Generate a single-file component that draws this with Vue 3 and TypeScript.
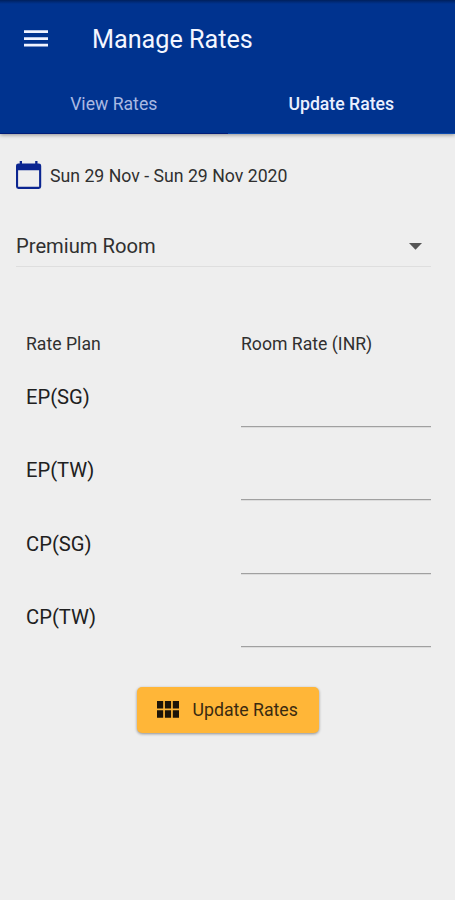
<script setup lang="ts">
import { ref } from 'vue'

interface RatePlan {
  name: string
  rate: string
}

const tabs: string[] = ['View Rates', 'Update Rates']
const activeTab = ref(1)
const plans = ref<RatePlan[]>([
  { name: 'EP(SG)', rate: '' },
  { name: 'EP(TW)', rate: '' },
  { name: 'CP(SG)', rate: '' },
  { name: 'CP(TW)', rate: '' },
])
</script>

<template>
  <div class="screen">
    <header class="header">
      <div class="bar">
        <button class="menu" aria-label="Menu">
          <svg width="24" height="17" viewBox="0 0 24 17">
            <path fill="#f0f3ff" d="M0 .3h24v2.700H0zM0 7.200h24v2.700H0zM0 13.800h24v2.700H0z" />
          </svg>
        </button>
        <h1 class="title">Manage Rates</h1>
      </div>
      <nav class="tabs">
        <button
          v-for="(tab, i) in tabs"
          :key="tab"
          class="tab"
          :class="{ active: i === activeTab }"
          @click="activeTab = i"
        >{{ tab }}</button>
      </nav>
    </header>

    <main class="content">
      <div class="dates">
        <svg width="26" height="29" viewBox="0 0 26 29">
          <path
            fill="#0b2590"
            fill-rule="evenodd"
            d="M3.700 0H6v2.400h13.200V0h2.300v2.400h1.300A2.400 2.400 0 0 1 25.200 4.800v20.700a2.400 2.400 0 0 1-2.400 2.400H2.400A2.400 2.400 0 0 1 0 25.500V4.800A2.400 2.400 0 0 1 2.400 2.400h1.300zM2.100 9.300v16.500h21V9.300z"
          />
        </svg>
        <span class="range">Sun 29 Nov - Sun 29 Nov 2020</span>
      </div>

      <div class="select">
        <span class="room">Premium Room</span>
        <svg class="caret" width="13" height="7" viewBox="0 0 13 7">
          <path fill="#555" d="M0 0h13L6.500 6.700z" />
        </svg>
      </div>

      <section class="rates">
        <div class="row head">
          <span>Rate Plan</span>
          <span>Room Rate (INR)</span>
        </div>
        <div v-for="plan in plans" :key="plan.name" class="row plan">
          <span class="name">{{ plan.name }}</span>
          <input v-model="plan.rate" class="rate" inputmode="decimal" :aria-label="plan.name" />
        </div>
      </section>

      <button class="update">
        <svg width="22" height="17" viewBox="0 0 22 17">
          <path
            fill="#1c1408"
            d="M0 0h6.200v7.600H0zM7.900 0h6.200v7.600H7.900zM15.800 0H22v7.600h-6.200zM0 9.200h6.200v7.600H0zM7.900 9.200h6.200v7.600H7.900zM15.800 9.200H22v7.600h-6.200z"
          />
        </svg>
        <span class="label">Update Rates</span>
      </button>
    </main>
  </div>
</template>

<style>
body {
  background: #eeeeee;
}
</style>

<style scoped>
.screen {
  min-height: 900px;
  box-sizing: border-box;
  background: #eeeeee;
  font-family: Roboto, 'Liberation Sans', sans-serif;
  color: #303030;
}

button {
  border: 0;
  padding: 0;
  background: none;
  font: inherit;
  color: inherit;
}

.header {
  height: 134px;
  box-sizing: border-box;
  background: linear-gradient(#00205c 0, #002a78 2px, #00338f 4px);
  box-shadow: 0 1px 4px rgba(0, 0, 0, 0.4);
}

.bar {
  display: flex;
  align-items: center;
  height: 72px;
  padding: 5px 24px 0;
  box-sizing: border-box;
}

.menu,
.menu svg {
  display: block;
}

.title {
  margin: 3px 0 0 44px;
  font-size: 25.200px;
  font-weight: 400;
  line-height: 32px;
  color: #f4f6ff;
  white-space: nowrap;
}

.tabs {
  display: grid;
  grid-template-columns: 1fr 1fr;
  height: 62px;
}

.tab {
  padding-top: 2px;
  font-size: 17.650px;
  color: #a9b9e2;
  border-bottom: 1px solid #001c78;
}

.tab.active {
  font-weight: 500;
  color: #eaf0ff;
  border-bottom-color: #0b49ae;
}

.content {
  display: flex;
  flex-direction: column;
  padding: 27px 24px 0 16px;
}

.dates {
  display: flex;
  align-items: center;
  height: 29px;
  gap: 8px;
}

.range {
  font-size: 17.700px;
  line-height: 24px;
  white-space: nowrap;
}

.select {
  display: flex;
  align-items: center;
  justify-content: space-between;
  height: 41px;
  margin-top: 35px;
  padding-right: 9px;
  border-bottom: 1px solid #dedede;
}

.caret {
  margin-top: 2px;
}

.room {
  font-size: 20.200px;
}

.rates {
  margin-top: 63px;
  padding-left: 10px;
}

.row {
  display: grid;
  grid-template-columns: 215px 1fr;
}

.head {
  height: 27px;
  line-height: 28px;
  font-size: 17.650px;
}

.plan {
  height: 73.400px;
}

.name {
  padding-top: 27px;
  font-size: 20.200px;
  line-height: 26px;
  color: #202020;
}

.rate {
  width: 100%;
  height: 70px;
  box-sizing: border-box;
  padding: 30px 0 0;
  border: 0;
  border-bottom: 1px solid #a0a0a0;
  border-radius: 0;
  outline: 0;
  background: transparent;
  box-shadow: 0 1px 0 #dcdcdc;
  font: 20px Roboto, sans-serif;
}

.update {
  display: flex;
  align-items: center;
  align-self: flex-start;
  width: 182px;
  height: 46px;
  margin: 36.400px 0 0 121px;
  padding-left: 20px;
  border-radius: 5px;
  background: #ffb638;
  box-shadow: 0 1px 3px rgba(0, 0, 0, 0.4);
  color: #3a2a10;
}

.label {
  margin-left: 13.500px;
  font-size: 17.700px;
  white-space: nowrap;
}
</style>
